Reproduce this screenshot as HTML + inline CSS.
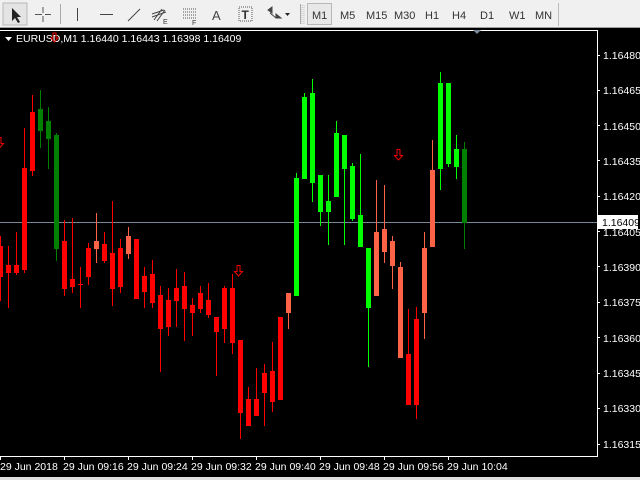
<!DOCTYPE html>
<html><head><meta charset="utf-8"><style>
body{margin:0;width:640px;height:480px;overflow:hidden;background:#000;font-family:"Liberation Sans",sans-serif}
</style></head><body>
<svg width="640" height="480" xmlns="http://www.w3.org/2000/svg" style="position:absolute;left:0;top:0" font-family="Liberation Sans, sans-serif">
<!-- toolbar -->
<rect x="0" y="0" width="640" height="28" fill="#f0f0f0"/>
<line x1="0" y1="27.5" x2="640" y2="27.5" stroke="#a0a0a0"/>
<rect x="3" y="3" width="24" height="22" fill="#e4e4e4" stroke="#b8b8b8"/>
<path d="M12 8 L12 21 L15 18 L18 23 L20 22 L17 17 L21 17 Z" fill="#222"/>
<path d="M43 7 V22 M35 14.5 H51" stroke="#555" stroke-width="1"/>
<rect x="42" y="13" width="3" height="3" fill="#f0f0f0"/>
<line x1="60.5" y1="4" x2="60.5" y2="24" stroke="#aaa"/>
<line x1="77.5" y1="8" x2="77.5" y2="21" stroke="#444"/>
<line x1="100" y1="14.5" x2="113" y2="14.5" stroke="#444"/>
<line x1="128" y1="21" x2="140" y2="9" stroke="#444"/>
<path d="M154 20 L162 9 M157 21 L165 10 M152 17 L166 12 M152 14 L164 10" stroke="#444"/>
<text x="163" y="24" font-size="7" fill="#333">E</text>
<path d="M183 9 H196 M183 12 H196 M183 15 H196 M183 18 H196" stroke="#555" stroke-dasharray="1 1"/>
<text x="192" y="25" font-size="7" fill="#333">F</text>
<text x="212" y="20" font-size="13" fill="#444">A</text>
<rect x="239" y="7" width="13" height="14" fill="none" stroke="#555" stroke-dasharray="1 1"/>
<text x="241.5" y="19" font-size="12" font-weight="bold" fill="#333">T</text>
<path d="M268 10 l4 -3 l0 6z M270 13 l6 5 M276 14 l5 4 l-5 0z" fill="#444" stroke="#444"/>
<path d="M285 13 h5 l-2.5 3z" fill="#222"/>
<line x1="300.5" y1="4" x2="300.5" y2="24" stroke="#aaa"/>
<path d="M302 5 V24 M304 5 V24" stroke="#bbb" stroke-dasharray="1 1"/>
<rect x="307.5" y="3.5" width="24" height="21" fill="#e8e8e8" stroke="#b8b8b8"/>
<g font-size="11" fill="#333">
<text x="312" y="19">M1</text><text x="340" y="19">M5</text><text x="366" y="19">M15</text><text x="394" y="19">M30</text>
<text x="425" y="19">H1</text><text x="452" y="19">H4</text><text x="480" y="19">D1</text><text x="509" y="19">W1</text><text x="535" y="19">MN</text>
</g>
<line x1="558.5" y1="3" x2="558.5" y2="26" stroke="#bbb"/>
<!-- chart frame -->
<path d="M0 30.5 H597.5 V456.5 H0" fill="none" stroke="#fff"/>
<path d="M473 30 h8 l-4 4z" fill="#778899"/>
<rect x="0" y="477" width="640" height="3" fill="#e0e0e0"/>
<!-- header -->
<path d="M5 37 h7 l-3.5 4z" fill="#fff"/>
<text x="16" y="42" font-size="10.5" fill="#fff">EURUSD,M1  1.16440 1.16443 1.16398 1.16409</text>
<path d="M53 33 h3 v5 h2 l-3.5 4 l-3.5 -4 h2z" fill="none" stroke="#e00"/>
<!-- price line -->
<line x1="0" y1="222.5" x2="597" y2="222.5" stroke="#778899"/>
<!-- candles -->
<g id="c"></g>
<!-- arrows -->
<path d="M397 149.5 h3 v6 h2.5 l-4 4.5 l-4 -4.5 h2.5z" fill="none" stroke="#e00"/>
<path d="M237 265.5 h3 v6 h2.5 l-4 4.5 l-4 -4.5 h2.5z" fill="none" stroke="#e00"/>
<path d="M-2 137.5 h3 v6 h2.5 l-4 4.5 l-4 -4.5 h2.5z" fill="none" stroke="#e00"/>
<!-- price axis -->
<g font-size="10.5" fill="#fff">
<g stroke="#fff"><path d="M597 90.5h3M597 125.5h3M597 160.5h3M597 196.5h3M597 231.5h3M597 266.5h3M597 302.5h3M597 337.5h3M597 373.5h3M597 408.5h3M597 444.5h3M597 55.5h3"/></g>
<text x="603" y="59">1.16480</text>
<text x="603" y="94">1.16465</text><text x="603" y="130">1.16450</text><text x="603" y="165">1.16435</text>
<text x="603" y="200">1.16420</text><text x="603" y="236">1.16405</text><text x="603" y="271">1.16390</text>
<text x="603" y="306">1.16375</text><text x="603" y="342">1.16360</text><text x="603" y="377">1.16345</text>
<text x="603" y="412">1.16330</text><text x="603" y="448">1.16315</text>
</g>
<rect x="598" y="215" width="40" height="14" fill="#fff"/>
<text x="602" y="226" font-size="10.5" fill="#000">1.16409</text>
<!-- time axis -->
<path d="M0.5 456v4M64.5 456v4M128.5 456v4M192.5 456v4M256.5 456v4M320.5 456v4M384.5 456v4M448.5 456v4" stroke="#fff"/>
<g font-size="10.5" fill="#fff">
<text x="0" y="470">29 Jun 2018</text><text x="63" y="470">29 Jun 09:16</text><text x="127" y="470">29 Jun 09:24</text>
<text x="191" y="470">29 Jun 09:32</text><text x="255" y="470">29 Jun 09:40</text><text x="319" y="470">29 Jun 09:48</text>
<text x="383" y="470">29 Jun 09:56</text><text x="447" y="470">29 Jun 10:04</text>
</g>
<g>
<!-- k, color, bodyTop, bodyBot, wickTop, wickBot -->
<g fill="#ff0000">
<rect x="0" y="236" width="1" height="65"/><rect x="-2" y="246" width="5" height="31"/>
<rect x="8" y="246" width="1" height="62"/><rect x="6" y="265" width="5" height="8"/>
<rect x="16" y="232" width="1" height="43"/><rect x="14" y="265" width="5" height="8"/>
<rect x="24" y="128" width="1" height="145"/><rect x="22" y="168" width="5" height="102"/>
<rect x="32" y="95" width="1" height="81"/><rect x="30" y="112" width="5" height="59"/>
</g>
<g fill="#008000">
<rect x="40" y="90" width="1" height="58"/><rect x="38" y="109" width="5" height="22"/>
<rect x="48" y="107" width="1" height="62"/><rect x="46" y="121" width="5" height="18"/>
<rect x="56" y="133" width="1" height="128"/><rect x="54" y="135" width="5" height="114"/>
</g>
<g fill="#ff0000">
<rect x="64" y="220" width="1" height="76"/><rect x="62" y="241" width="5" height="48"/>
<rect x="72" y="218" width="1" height="75"/><rect x="70" y="279" width="5" height="8"/>
<rect x="80" y="267" width="1" height="41"/><rect x="78" y="284" width="5" height="1"/>
<rect x="88" y="243" width="1" height="42"/><rect x="86" y="248" width="5" height="29"/>
<rect x="104" y="232" width="1" height="31"/><rect x="102" y="244" width="5" height="17"/>
<rect x="112" y="201" width="1" height="105"/><rect x="110" y="253" width="5" height="36"/>
<rect x="120" y="239" width="1" height="54"/><rect x="118" y="248" width="5" height="39"/>
<rect x="136" y="239" width="1" height="60"/><rect x="134" y="239" width="5" height="60"/>
<rect x="144" y="267" width="1" height="41"/><rect x="142" y="276" width="5" height="16"/>
<rect x="152" y="260" width="1" height="48"/><rect x="150" y="274" width="5" height="29"/>
<rect x="160" y="286" width="1" height="86"/><rect x="158" y="295" width="5" height="34"/>
<rect x="168" y="288" width="1" height="48"/><rect x="166" y="300" width="5" height="27"/>
<rect x="176" y="269" width="1" height="58"/><rect x="174" y="288" width="5" height="13"/>
<rect x="184" y="272" width="1" height="69"/><rect x="182" y="286" width="5" height="23"/>
<rect x="192" y="298" width="1" height="38"/><rect x="190" y="305" width="5" height="8"/>
<rect x="200" y="286" width="1" height="27"/><rect x="198" y="293" width="5" height="16"/>
<rect x="208" y="283" width="1" height="35"/><rect x="206" y="300" width="5" height="15"/>
<rect x="216" y="317" width="1" height="59"/><rect x="214" y="317" width="5" height="15"/>
<rect x="224" y="286" width="1" height="57"/><rect x="222" y="288" width="5" height="41"/>
<rect x="232" y="274" width="1" height="80"/><rect x="230" y="288" width="5" height="55"/>
<rect x="240" y="340" width="1" height="99"/><rect x="238" y="340" width="5" height="73"/>
<rect x="248" y="387" width="1" height="39"/><rect x="246" y="399" width="5" height="27"/>
<rect x="256" y="368" width="1" height="48"/><rect x="254" y="399" width="5" height="17"/>
<rect x="264" y="364" width="1" height="62"/><rect x="262" y="373" width="5" height="20"/>
<rect x="272" y="342" width="1" height="70"/><rect x="270" y="371" width="5" height="31"/>
<rect x="280" y="317" width="1" height="83"/><rect x="278" y="317" width="5" height="83"/>
<rect x="408" y="309" width="1" height="96"/><rect x="406" y="354" width="5" height="51"/>
<rect x="416" y="307" width="1" height="112"/><rect x="414" y="319" width="5" height="86"/>
</g>
<g fill="#ff6347">
<rect x="96" y="213" width="1" height="50"/><rect x="94" y="241" width="5" height="8"/>
<rect x="128" y="227" width="1" height="32"/><rect x="126" y="236" width="5" height="18"/>
<rect x="288" y="293" width="1" height="36"/><rect x="286" y="293" width="5" height="20"/>
<rect x="376" y="180" width="1" height="116"/><rect x="374" y="232" width="5" height="64"/>
<rect x="384" y="185" width="1" height="78"/><rect x="382" y="229" width="5" height="23"/>
<rect x="392" y="236" width="1" height="53"/><rect x="390" y="241" width="5" height="25"/>
<rect x="400" y="262" width="1" height="96"/><rect x="398" y="267" width="5" height="91"/>
<rect x="424" y="232" width="1" height="107"/><rect x="422" y="248" width="5" height="65"/>
<rect x="432" y="140" width="1" height="107"/><rect x="430" y="170" width="5" height="77"/>
</g>
<g fill="#00ff00">
<rect x="296" y="173" width="1" height="123"/><rect x="294" y="178" width="5" height="118"/>
<rect x="304" y="93" width="1" height="86"/><rect x="302" y="97" width="5" height="82"/>
<rect x="312" y="79" width="1" height="123"/><rect x="310" y="93" width="5" height="90"/>
<rect x="320" y="175" width="1" height="51"/><rect x="318" y="175" width="5" height="37"/>
<rect x="328" y="175" width="1" height="70"/><rect x="326" y="201" width="5" height="11"/>
<rect x="336" y="121" width="1" height="76"/><rect x="334" y="133" width="5" height="64"/>
<rect x="344" y="135" width="1" height="110"/><rect x="342" y="135" width="5" height="34"/>
<rect x="352" y="163" width="1" height="58"/><rect x="350" y="166" width="5" height="53"/>
<rect x="360" y="154" width="1" height="93"/><rect x="358" y="215" width="5" height="32"/>
<rect x="368" y="248" width="1" height="119"/><rect x="366" y="248" width="5" height="60"/>
<rect x="440" y="72" width="1" height="118"/><rect x="438" y="83" width="5" height="86"/>
<rect x="448" y="83" width="1" height="84"/><rect x="446" y="83" width="5" height="81"/>
<rect x="456" y="135" width="1" height="44"/><rect x="454" y="149" width="5" height="18"/>
</g>
<g fill="#008000">
<rect x="464" y="142" width="1" height="107"/><rect x="462" y="149" width="5" height="74"/>
</g>
</g>
</svg>
</body></html>
